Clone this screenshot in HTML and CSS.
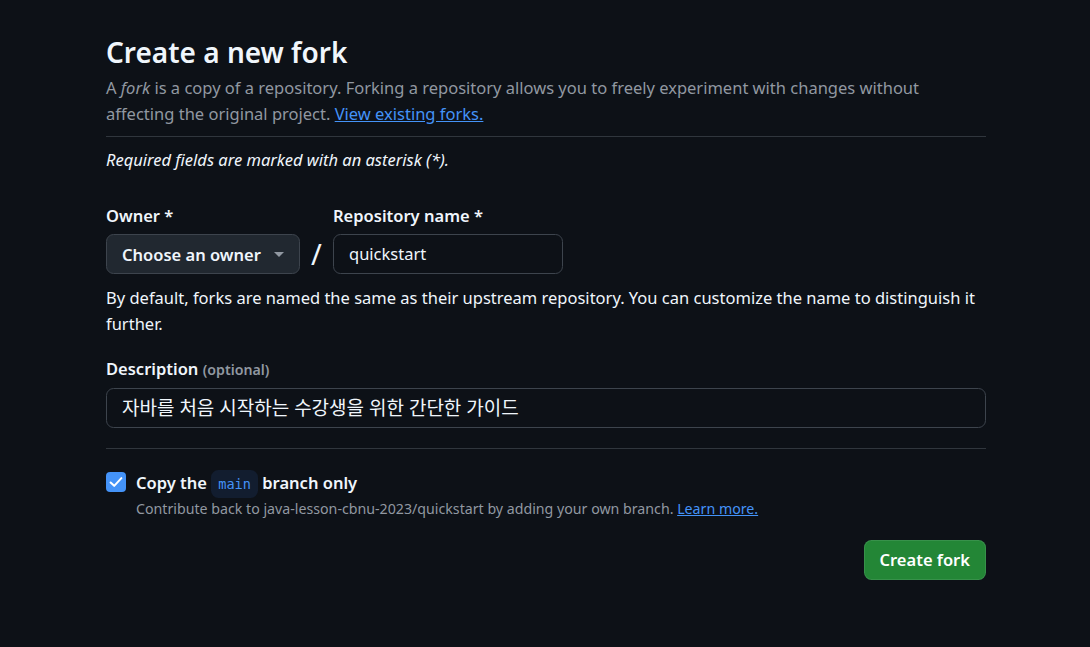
FILE: index.html
```html
<!DOCTYPE html>
<html lang="en">
<head>
<meta charset="utf-8">
<title>Create a new fork</title>
<link rel="stylesheet" href="styles.css">
</head>
<body>
<main class="page">
  <h1 class="title">Create a new fork</h1>
  <p class="lead">A <em>fork</em> is a copy of a repository. Forking a repository allows you to freely experiment with changes without affecting the original project. <a href="#" class="link">View existing forks.</a></p>
  <hr class="rule rule-top">
  <p class="required">Required fields are marked with an asterisk (*).</p>

  <div class="name-row">
    <div class="field">
      <label class="label">Owner *</label>
      <button class="owner-btn" type="button">
        <span>Choose an owner</span>
        <span class="caret"></span>
      </button>
    </div>
    <span class="slash">/</span>
    <div class="field">
      <label class="label">Repository name *</label>
      <div class="input repo-input">quickstart</div>
    </div>
  </div>
  <p class="hint">By default, forks are named the same as their upstream repository. You can customize the name to distinguish it further.</p>

  <div class="field desc-field">
    <label class="label">Description <span class="optional">(optional)</span></label>
    <div class="input desc-input">자바를 처음 시작하는 수강생을 위한 간단한 가이드</div>
  </div>

  <hr class="rule rule-bottom">

  <div class="check-row">
    <span class="checkbox">
      <svg viewBox="0 0 16 16" width="16" height="16"><path d="M3.2 8.4 6.4 11.4 12.8 4.6" fill="none" stroke="#ffffff" stroke-width="1.8" stroke-linecap="round" stroke-linejoin="round"/></svg>
    </span>
    <div class="check-text">
      <div class="check-label">Copy the <code class="branch">main</code> branch only</div>
      <div class="check-note">Contribute back to java-lesson-cbnu-2023/quickstart by adding your own branch. <a href="#" class="link">Learn more.</a></div>
    </div>
  </div>

  <div class="actions">
    <button class="create-btn" type="button">Create fork</button>
  </div>
</main>
</body>
</html>
```

FILE: styles.css
```css
* { box-sizing: border-box; }
html, body {
  margin: 0;
  padding: 0;
  background: #0d1117;
}
body {
  padding-left: 2px;
  font-family: "Noto Sans", "Noto Sans CJK KR", sans-serif;
  font-size: 16.5px;
  line-height: 1.5;
  color: #f0f6fc;
}
.page {
  width: 880px;
  margin: 0 auto;
  padding-top: 30px;
}
.title {
  margin: 0;
  font-size: 28px;
  line-height: 45px;
  font-weight: 600;
  color: #f0f6fc;
}
.lead {
  margin: 0;
  color: #9198a1;
  line-height: 26.25px;
}
.link {
  color: #4493f8;
  text-decoration: underline;
}
.rule {
  border: 0;
  height: 1px;
  background: #30363d;
  margin: 0;
}
.rule-top { margin-top: 8px; }
.required {
  margin: 10px 0 0;
  font-style: italic;
  line-height: 26.25px;
}
.name-row {
  display: flex;
  align-items: flex-end;
  margin-top: 30px;
}
.field {
  display: flex;
  flex-direction: column;
  gap: 5px;
}
.label {
  font-weight: 600;
  line-height: 26.25px;
}
.optional {
  font-size: 14.2px;
  font-weight: 600;
  color: #9198a1;
}
.owner-btn {
  width: 194px;
  height: 40px;
  display: flex;
  align-items: center;
  justify-content: space-between;
  padding: 0 15px 0 15px;
  background: #212830;
  border: 1px solid #3d444d;
  border-radius: 7.5px;
  color: #f0f6fc;
  font-family: inherit;
  font-size: 16.5px;
  font-weight: 600;
}
.caret {
  width: 0;
  height: 0;
  border-left: 5px solid transparent;
  border-right: 5px solid transparent;
  border-top: 5px solid #9198a1;
}
.slash {
  width: 33px;
  height: 40px;
  text-align: center;
  font-size: 29px;
  line-height: 40px;
  color: #f0f6fc;
}
.input {
  height: 40px;
  display: flex;
  align-items: center;
  padding: 0 15px;
  background: #0d1117;
  border: 1px solid #3d444d;
  border-radius: 7.5px;
  color: #f0f6fc;
}
.repo-input { width: 230px; }
.hint {
  margin: 11px 0 0;
  line-height: 26.25px;
}
.desc-field { margin-top: 18px; }
.desc-input {
  width: 880px;
  font-size: 19px;
  padding-top: 1px;
}
.rule-bottom { margin-top: 20px; }
.check-row {
  display: flex;
  gap: 10px;
  margin-top: 21px;
}
.checkbox {
  flex: none;
  width: 20px;
  height: 20px;
  margin-top: 2px;
  border-radius: 4px;
  background: #4493f8;
  display: flex;
  align-items: center;
  justify-content: center;
}
.checkbox svg { width: 18px; height: 18px; }
.check-label {
  font-weight: 600;
  line-height: 26.25px;
}
.branch {
  display: inline-block;
  padding: 0 7px;
  height: 28px;
  line-height: 28px;
  font-family: "DejaVu Sans Mono", monospace;
  font-size: 13.6px;
  font-weight: 400;
  color: #4493f8;
  background: #121d2f;
  border-radius: 7.5px;
  vertical-align: middle;
}
.check-note {
  font-size: 14.2px;
  line-height: 22.5px;
  color: #9198a1;
}
.actions {
  display: flex;
  justify-content: flex-end;
  margin-top: 19px;
}
.create-btn {
  height: 40px;
  padding: 0 15px;
  background: #238636;
  border: 1px solid rgba(240, 246, 252, 0.1);
  border-radius: 7.5px;
  color: #ffffff;
  font-family: inherit;
  font-size: 16.5px;
  font-weight: 600;
}
```
